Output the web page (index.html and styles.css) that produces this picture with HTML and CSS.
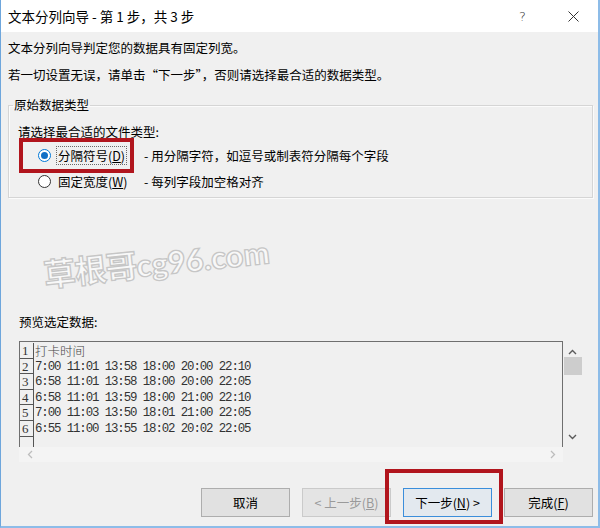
FILE: index.html
```html
<!DOCTYPE html>
<html lang="zh-CN">
<head>
<meta charset="utf-8">
<title>文本分列向导</title>
<link rel="stylesheet" href="styles.css">
</head>
<body>
<div class="window">
  <div class="titlebar">
    <span class="title">文本分列向导 - 第 1 步，共 3 步</span>
    <span class="help">?</span>
    <span class="close">
      <svg width="11" height="11" viewBox="0 0 11 11"><path d="M0.5 0.5 L10.5 10.5 M10.5 0.5 L0.5 10.5" stroke="#333" stroke-width="1" fill="none"/></svg>
    </span>
  </div>
  <div class="content">
    <p class="intro first">文本分列向导判定您的数据具有固定列宽。</p>
    <p class="intro second">若一切设置无误，请单击“下一步”，否则请选择最合适的数据类型。</p>

    <fieldset class="group">
      <legend>原始数据类型</legend>
      <div class="prompt">请选择最合适的文件类型:</div>
      <div class="option first-opt">
        <span class="radio checked"></span>
        <span class="opt-label"><span class="focus">分隔符号(<u>D</u>)</span></span>
        <span class="desc">- 用分隔字符，如逗号或制表符分隔每个字段</span>
        <span class="mark mark-radio"></span>
      </div>
      <div class="option">
        <span class="radio"></span>
        <span class="opt-label"><span class="nofocus">固定宽度(<u>W</u>)</span></span>
        <span class="desc">- 每列字段加空格对齐</span>
      </div>
    </fieldset>

    <div class="spacer">
      <div class="watermark">草根哥<span class="wm-latin">cg96.com</span></div>
    </div>

    <div class="preview-label">预览选定数据:</div>
    <div class="preview">
      <div class="data">
        <div class="row"><span class="num">1</span><span class="cell cjk">打卡时间</span></div>
        <div class="row"><span class="num">2</span><span class="cell">7:00 11:01 13:58 18:00 20:00 22:10</span></div>
        <div class="row"><span class="num">3</span><span class="cell">6:58 11:01 13:58 18:00 20:00 22:05</span></div>
        <div class="row"><span class="num">4</span><span class="cell">6:58 11:01 13:59 18:00 21:00 22:10</span></div>
        <div class="row"><span class="num">5</span><span class="cell">7:00 11:03 13:50 18:01 21:00 22:05</span></div>
        <div class="row"><span class="num">6</span><span class="cell">6:55 11:00 13:55 18:02 20:02 22:05</span></div>
        <div class="row"><span class="num"></span><span class="cell"></span></div>
      </div>
      <div class="vscroll">
        <svg class="chev" width="9" height="6" viewBox="0 0 9 6"><path d="M1 5 L4.5 1.5 L8 5" stroke="#5a5a5a" stroke-width="1.4" fill="none"/></svg>
        <div class="thumb"></div>
        <div class="vfill"></div>
        <svg class="chev" width="9" height="6" viewBox="0 0 9 6"><path d="M1 1 L4.5 4.5 L8 1" stroke="#5a5a5a" stroke-width="1.4" fill="none"/></svg>
      </div>
      <div class="hscroll">
        <svg width="6" height="9" viewBox="0 0 6 9"><path d="M5 1 L1.5 4.5 L5 8" stroke="#bdbdbd" stroke-width="1.3" fill="none"/></svg>
        <svg width="6" height="9" viewBox="0 0 6 9"><path d="M1 1 L4.5 4.5 L1 8" stroke="#bdbdbd" stroke-width="1.3" fill="none"/></svg>
      </div>
      <div class="corner"></div>
    </div>

    <div class="buttons">
      <button class="btn">取消</button>
      <button class="btn disabled">&lt; 上一步(<u>B</u>)</button>
      <button class="btn default">下一步(<u>N</u>) &gt;<span class="mark mark-btn"></span></button>
      <button class="btn">完成(<u>F</u>)</button>
    </div>
  </div>
</div>
</body>
</html>
```

FILE: styles.css
```css
* { box-sizing: border-box; }

html, body {
  margin: 0;
  padding: 0;
  width: 600px;
  height: 528px;
  overflow: hidden;
  background: #f0f0f0;
}

body {
  font-family: "Noto Sans CJK SC", "Noto Sans", sans-serif;
  font-size: 12.5px;
  color: #000;
}

.window {
  width: 600px;
  height: 528px;
  display: flex;
  flex-direction: column;
  border-left: 1px solid #6ea6dc;
  border-right: 2px solid #8dbce8;
  border-bottom: 2px solid #8dbce8;
  background: #f0f0f0;
}

.titlebar {
  height: 32px;
  flex: none;
  background: #fff;
  display: flex;
  align-items: center;
  padding-left: 7px;
}

.title {
  font-size: 13.5px;
  flex: 1;
  line-height: 18px;
  padding-bottom: 1px;
}

.help {
  font-family: "DejaVu Sans", sans-serif;
  font-size: 13px;
  font-weight: 300;
  color: #333;
  width: 12px;
  margin-right: 37px;
}

.close {
  display: flex;
  width: 11px;
  margin-right: 19px;
}

.content {
  flex: 1;
  display: flex;
  flex-direction: column;
  padding: 0 5px 0 7px;
}

.intro {
  margin: 0;
  line-height: 18px;
}
.intro.first { margin-top: 7px; }
.intro.second { margin-top: 9px; }

.group {
  margin: 12px 0 0 0;
  padding: 0 0 2px 9px;
  border: 1px solid #d5d5d5;
  box-shadow: inset 1px 1px 0 #fbfbfb, 1px 1px 0 #fbfbfb;
  height: 102px;
  min-width: 0;
}

.group legend {
  padding: 0 1px;
  margin-left: -5px;
  line-height: 18px;
}

.prompt {
  line-height: 18px;
  margin-top: 9px;
}

.option {
  position: relative;
  height: 26px;
  display: flex;
  align-items: center;
}
.option.first-opt { margin-top: 1px; }

.radio {
  width: 13px;
  height: 13px;
  border-radius: 50%;
  border: 1px solid #333;
  background: #fff;
  margin-left: 20px;
  margin-right: 5px;
  flex: none;
  display: flex;
  align-items: center;
  justify-content: center;
}
.radio.checked { border-color: #0078d7; }
.radio.checked::after {
  content: "";
  width: 7px;
  height: 7px;
  border-radius: 50%;
  background: #0f6fc6;
}

.opt-label {
  width: 88px;
  flex: none;
}
.focus, .nofocus {
  display: inline-block;
  padding: 0 1px;
  border: 1px dotted #6a6a6a;
  line-height: 17px;
}
.nofocus { border-color: transparent; }

.desc { white-space: nowrap; }

.mark {
  position: absolute;
  border: 4px solid #b1151d;
  pointer-events: none;
}
.mark-radio {
  left: 1px;
  top: -4px;
  width: 115px;
  height: 35px;
}

.spacer {
  position: relative;
  height: 115px;
  flex: none;
}

.watermark {
  position: absolute;
  left: 38px;
  top: 52px;
  font-family: "Noto Sans CJK SC", "DejaVu Sans", sans-serif;
  font-size: 32px;
  font-weight: 700;
  letter-spacing: -1px;
  color: #f8f8f8;
  -webkit-text-stroke: 1.3px #c6c6c6;
  transform: rotate(-6deg);
  transform-origin: left bottom;
  white-space: nowrap;
}
.wm-latin {
  font-family: "Lato", "DejaVu Sans", sans-serif;
  font-size: 31px;
  font-weight: 900;
  letter-spacing: 0;
}

.preview-label {
  line-height: 18px;
  margin-left: 11px;
}

.preview {
  margin: 10px 0 0 11px;
  width: 565px;
  height: 121px;
  display: grid;
  grid-template-columns: 544px 21px;
  grid-template-rows: 106px 15px;
  flex: none;
}

.data {
  border: 1px solid #6f6f6f;
  border-bottom: none;
  padding-top: 1px;
  overflow: hidden;
}

.row {
  height: 15.6px;
  display: flex;
  align-items: stretch;
}

.num {
  width: 14px;
  flex: none;
  border-right: 1px solid #555;
  border-bottom: 1px solid #555;
  font-family: "Liberation Serif", serif;
  font-size: 13px;
  line-height: 15px;
  padding-left: 2px;
  color: #333;
}

.cell {
  font-family: "Liberation Mono", monospace;
  font-size: 12.4px;
  letter-spacing: -1.1px;
  line-height: 16px;
  color: #333;
  padding-left: 1px;
  white-space: pre;
}
.cell.cjk {
  font-family: "Noto Sans CJK SC", sans-serif;
  font-size: 12.5px;
  letter-spacing: 0;
  font-weight: 300;
  color: #444;
}

.vscroll {
  display: flex;
  flex-direction: column;
  align-items: center;
  padding: 8px 2px 0 0;
}
.vscroll .chev { flex: none; }
.thumb {
  width: 18px;
  height: 18px;
  background: #cdcdcd;
  margin-top: 2px;
  margin-left: 1px;
  flex: none;
}
.vfill { flex: 1; }
.vscroll .chev:last-child { margin-bottom: 7px; }

.hscroll {
  background: #f4f4f4;
  display: flex;
  justify-content: space-between;
  align-items: center;
  padding: 0 7px 0 8px;
}

.buttons {
  margin-top: 26px;
  display: flex;
  justify-content: flex-end;
  gap: 12px;
  padding-right: 0;
}

.btn {
  position: relative;
  width: 89px;
  height: 29px;
  font-family: "Noto Sans CJK SC", sans-serif;
  font-size: 12.5px;
  background: #e1e1e1;
  border: 1px solid #adadad;
  color: #000;
  padding: 0;
}
.btn.disabled {
  background: #e4e4e4;
  border-color: #cacaca;
  color: #9a9a9a;
}
.btn.default {
  border-color: #3b8edb;
  background: #e3e9ef;
}
.mark-btn {
  left: -19px;
  top: -20px;
  width: 118px;
  height: 55px;
}
```
